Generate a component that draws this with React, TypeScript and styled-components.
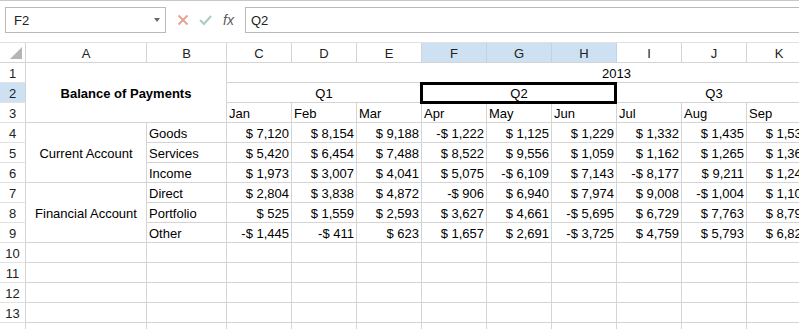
import React from "react";
import styled, { createGlobalStyle, css } from "styled-components";

const GRID = "#d4d4d4";
const SELECTED = "#cde1f2";

// L..N lie past the window's right edge; they only exist so the "2013"
// merge (C1:N1) centres where Excel puts it, so they carry no text.
const COLUMNS = ["A", "B", "C", "D", "E", "F", "G", "H", "I", "J", "K", "", "", ""];
const SELECTED_COLUMNS = ["F", "G", "H"];
const MONTHS = ["Jan", "Feb", "Mar", "Apr", "May", "Jun", "Jul", "Aug", "Sep", "", "", ""];
const QUARTERS = ["Q1", "Q2", "Q3", ""];

const DATA = [
  { group: "Current Account", label: "Goods", values: [7120, 8154, 9188, -1222, 1125, 1229, 1332, 1435, 1538] },
  { label: "Services", values: [5420, 6454, 7488, 8522, 9556, 1059, 1162, 1265, 1368] },
  { label: "Income", values: [1973, 3007, 4041, 5075, -6109, 7143, -8177, 9211, 1245] },
  { group: "Financial Account", label: "Direct", values: [2804, 3838, 4872, -906, 6940, 7974, 9008, -1004, 1107] },
  { label: "Portfolio", values: [525, 1559, 2593, 3627, 4661, -5695, 6729, 7763, 8797] },
  { label: "Other", values: [-1445, -411, 623, 1657, 2691, -3725, 4759, 5793, 6827] },
];

const money = (n: number) =>
  (n < 0 ? "-$ " : "$ ") + Math.abs(n).toLocaleString("en-US");

const GlobalStyle = createGlobalStyle`
  html, body {
    margin: 0;
    padding: 0;
    background: #fff;
    overflow: hidden;
  }
  body {
    font-family: "Liberation Sans", Arial, sans-serif;
    font-size: 13px;
    color: #000;
  }
`;

const Window = styled.div`
  width: 799px;
  height: 329px;
  overflow: hidden;
`;

/* formula bar */

const FormulaBar = styled.div`
  box-sizing: border-box;
  height: 43px;
  display: flex;
  align-items: flex-start;
  padding: 6px 0 0 5px;
  border-top: 1px solid #c8c8c8;
  border-bottom: 1px solid #e1e1e1;
`;

const NameBox = styled.div`
  box-sizing: border-box;
  width: 161px;
  height: 26px;
  border: 1px solid #b9b9b9;
  display: flex;
  align-items: center;
  justify-content: space-between;
  padding: 0 5px 0 8px;
  color: #222;
`;

const DropArrow = styled.span`
  width: 0;
  height: 0;
  border-left: 3.5px solid transparent;
  border-right: 3.5px solid transparent;
  border-top: 4px solid #6a6a6a;
`;

const IconGroup = styled.div`
  width: 79px;
  height: 26px;
  display: flex;
  align-items: center;
  gap: 10px;
  padding-left: 11px;
  box-sizing: border-box;
`;

const Fx = styled.span`
  font-style: italic;
  font-size: 14px;
  color: #5c5c5c;
  margin-left: 1px;
`;

const FormulaInput = styled.div`
  box-sizing: border-box;
  flex: 1;
  height: 26px;
  border: 1px solid #b9b9b9;
  border-right: none;
  display: flex;
  align-items: center;
  padding-left: 5px;
  color: #222;
`;

/* sheet */

const Sheet = styled.div`
  display: grid;
  grid-template-columns: 26px 121px 80px repeat(12, 65px);
  grid-auto-rows: 20px;
  width: max-content;
`;

const headerBase = css`
  box-sizing: border-box;
  display: flex;
  align-items: center;
  justify-content: center;
  padding-top: 1px;
  color: #222;
  border-right: 1px solid ${GRID};
  border-bottom: 1px solid ${GRID};
`;

const Corner = styled.div`
  ${headerBase};
  align-items: flex-end;
  justify-content: flex-end;
  padding: 0 3px 3px 0;
`;

const ColHeader = styled.div<{ $selected?: boolean }>`
  ${headerBase};
  background: ${(p) => (p.$selected ? SELECTED : "#fff")};
  ${(p) => p.$selected && `border-right-color: #bcd3e8;`}
`;

const RowHeader = styled.div<{ $selected?: boolean }>`
  ${headerBase};
  background: ${(p) => (p.$selected ? SELECTED : "#fff")};
  border-bottom-color: #e2e2e2;
`;

const Cell = styled.div<{
  $cols?: number;
  $rows?: number;
  $align?: "left" | "center" | "right";
  $bold?: boolean;
  $active?: boolean;
}>`
  box-sizing: border-box;
  grid-column: span ${(p) => p.$cols ?? 1};
  grid-row: span ${(p) => p.$rows ?? 1};
  border-right: 1px solid ${GRID};
  border-bottom: 1px solid ${GRID};
  display: flex;
  align-items: center;
  justify-content: ${(p) =>
    p.$align === "center" ? "center" : p.$align === "right" ? "flex-end" : "flex-start"};
  padding: 2px 2px 0 2px;
  white-space: nowrap;
  font-weight: ${(p) => (p.$bold ? 700 : 400)};
  ${(p) =>
    p.$active &&
    css`
      position: relative;
      z-index: 1;
      &::after {
        content: "";
        position: absolute;
        top: -1px;
        right: -1px;
        bottom: -2px;
        left: -2px;
        border: 3px solid #000;
      }
    `}
`;

const CloseIcon = () => (
  <svg width="12" height="12" viewBox="0 0 12 12">
    <path d="M1.5 1.5 L10.5 10.5 M10.5 1.5 L1.5 10.5" stroke="#e9a196" strokeWidth="2" fill="none" />
  </svg>
);

const CheckIcon = () => (
  <svg width="13" height="12" viewBox="0 0 13 12">
    <path d="M1 6 L5 10 L12 2" stroke="#adcbbd" strokeWidth="2" fill="none" />
  </svg>
);

const CornerTriangle = () => (
  <svg width="12" height="12" viewBox="0 0 12 12">
    <polygon points="12,0 12,12 0,12" fill="#b5b5b5" />
  </svg>
);

export default function App() {
  const rowHeader = (n: number) => (
    <RowHeader key={`r${n}`} $selected={n === 2}>
      {n}
    </RowHeader>
  );

  return (
    <Window>
      <GlobalStyle />
      <FormulaBar>
        <NameBox>
          <span>F2</span>
          <DropArrow />
        </NameBox>
        <IconGroup>
          <CloseIcon />
          <CheckIcon />
          <Fx>fx</Fx>
        </IconGroup>
        <FormulaInput>Q2</FormulaInput>
      </FormulaBar>

      <Sheet>
        <Corner>
          <CornerTriangle />
        </Corner>
        {COLUMNS.map((c, i) => (
          <ColHeader key={i} $selected={SELECTED_COLUMNS.includes(c)}>
            {c}
          </ColHeader>
        ))}

        {rowHeader(1)}
        <Cell $cols={2} $rows={3} $align="center" $bold>
          Balance of Payments
        </Cell>
        <Cell $cols={12} $align="center">
          2013
        </Cell>

        {rowHeader(2)}
        {QUARTERS.map((q, i) => (
          <Cell key={i} $cols={3} $align="center" $active={q === "Q2"}>
            {q}
          </Cell>
        ))}

        {rowHeader(3)}
        {MONTHS.map((m, i) => (
          <Cell key={i}>{m}</Cell>
        ))}

        {DATA.map((row, i) => (
          <React.Fragment key={row.label}>
            {rowHeader(i + 4)}
            {row.group && (
              <Cell $rows={3} $align="center">
                {row.group}
              </Cell>
            )}
            <Cell>{row.label}</Cell>
            {row.values.map((v, j) => (
              <Cell key={j} $align="right">
                {money(v)}
              </Cell>
            ))}
            <Cell />
            <Cell />
            <Cell />
          </React.Fragment>
        ))}

        {[10, 11, 12, 13, 14].map((n) => (
          <React.Fragment key={n}>
            {rowHeader(n)}
            {COLUMNS.map((_, i) => (
              <Cell key={i} />
            ))}
          </React.Fragment>
        ))}
      </Sheet>
    </Window>
  );
}
